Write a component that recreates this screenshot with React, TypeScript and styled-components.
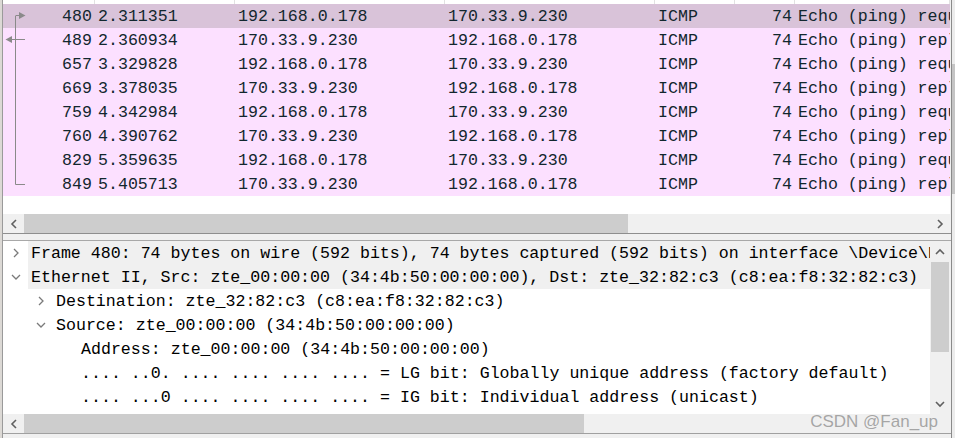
import React from "react";
import styled, { createGlobalStyle } from "styled-components";

const GlobalStyle = createGlobalStyle`
  html, body { margin: 0; padding: 0; background: #f0f0f0; overflow: hidden; }
  #root { width: 955px; height: 438px; }
`;

const MONO = `"Liberation Mono", "DejaVu Sans Mono", monospace`;

const Window = styled.div`
  position: relative;
  display: flex;
  width: 955px;
  height: 438px;
  overflow: hidden;
  background: #f0f0f0;
`;

const LeftEdge = styled.div`
  width: 2px;
  flex: none;
  background: #dcd9d5;
  border-right: 1px solid #9a9a9a;
`;

const Main = styled.div`
  width: 948px;
  flex: none;
  display: flex;
  flex-direction: column;
`;

const RightEdge = styled.div`
  flex: 1;
  display: flex;
  flex-direction: column;
  border-left: 1px solid #8a8a8a;
  background: #ececec;
`;

const EdgeThumb = styled.div<{ $top: number; $h: number }>`
  margin-top: ${(p) => p.$top}px;
  height: ${(p) => p.$h}px;
  background: #c4c4c4;
`;

/* ---------- Packet list ---------- */

const ListPane = styled.div`
  height: 233px;
  display: flex;
  flex-direction: column;
  background: #ffffff;
  width: 947px;
`;

const COLS = "92px 140px 210px 210px 80px 60px 1fr";

const HeaderStrip = styled.div`
  height: 4px;
  display: grid;
  grid-template-columns: ${COLS};
  background: #ffffff;
`;

const HeaderCell = styled.div`
  border-right: 1px solid #e2e2e2;
`;

const Rows = styled.div`
  position: relative;
`;

const Row = styled.div<{ $selected?: boolean }>`
  height: 24px;
  display: grid;
  grid-template-columns: ${COLS};
  align-items: center;
  background: ${(p) => (p.$selected ? "#d9c3d9" : "#fce0ff")};
  color: #12272e;
  font-family: ${MONO};
  font-size: 16.63px;
  white-space: nowrap;
  overflow: hidden;
`;

const Cell = styled.div<{ $right?: boolean }>`
  padding: ${(p) => (p.$right ? "0 3px 0 0" : "0 0 0 3px")};
  text-align: ${(p) => (p.$right ? "right" : "left")};
  overflow: hidden;
`;

const Gutter = styled.svg`
  position: absolute;
  left: 0;
  top: 0;
  pointer-events: none;
`;

const ListFiller = styled.div`
  flex: 1;
  background: #ffffff;
`;

/* ---------- Scrollbars ---------- */

const HScroll = styled.div`
  height: 19px;
  display: flex;
  background: #f0f0f0;
  flex: none;
`;

const ScrollButton = styled.div<{ $w?: number; $h?: number }>`
  width: ${(p) => p.$w ?? 21}px;
  height: ${(p) => p.$h ?? 19}px;
  flex: none;
  display: flex;
  align-items: center;
  justify-content: center;
  background: #f0f0f0;
`;

const HThumb = styled.div<{ $w: number }>`
  width: ${(p) => p.$w}px;
  flex: none;
  background: #cdcdcd;
`;

const Track = styled.div`
  flex: 1;
  background: #f0f0f0;
`;

const VScroll = styled.div`
  width: 20px;
  flex: none;
  display: flex;
  flex-direction: column;
  background: #f0f0f0;
`;

const VThumb = styled.div<{ $h: number }>`
  height: ${(p) => p.$h}px;
  margin: 0 1px 0 1px;
  flex: none;
  background: #cdcdcd;
`;

const Splitter = styled.div`
  height: 6px;
  flex: none;
  background: #f0f0f0;
  border-top: 1px solid #8e8e8e;
  border-bottom: 1px solid #a8a8a8;
`;

/* ---------- Detail tree ---------- */

const DetailPane = styled.div`
  height: 192px;
  display: flex;
  flex: none;
  width: 947px;
`;

const DetailMain = styled.div`
  width: 927px;
  display: flex;
  flex-direction: column;
`;

const DetailRows = styled.div`
  flex: 1;
  background: #ffffff;
  overflow: hidden;
`;

const TreeRow = styled.div<{ $level: number }>`
  height: 24px;
  display: flex;
  align-items: stretch;
  padding-left: ${(p) => p.$level * 25}px;
  font-family: ${MONO};
  font-size: 16.63px;
  color: #000000;
  white-space: nowrap;
`;

const Toggle = styled.div`
  width: 25px;
  flex: none;
  display: flex;
  align-items: center;
  justify-content: center;
`;

const TreeText = styled.div<{ $hl?: boolean }>`
  flex: 1;
  display: flex;
  align-items: center;
  padding-left: 3px;
  overflow: hidden;
  background: ${(p) => (p.$hl ? "#f0f0f0" : "transparent")};
`;

const BottomArea = styled.div`
  flex: 1;
  border-top: 1px solid #a0a0a0;
  background: #f0f0f0;
`;

const Watermark = styled.div`
  position: absolute;
  right: 17px;
  bottom: 5px;
  font-family: "Liberation Sans", Arial, sans-serif;
  font-size: 17px;
  line-height: 22px;
  color: rgba(140, 140, 140, 0.75);
  pointer-events: none;
`;

/* ---------- Icons ---------- */

const Chevron = ({ dir, color = "#7a7a7a", size = 10, sw = 1.3 }: { dir: "l" | "r" | "u" | "d"; color?: string; size?: number; sw?: number }) => {
  const pts = {
    r: "3,1 7,5 3,9",
    l: "7,1 3,5 7,9",
    d: "1,3 5,7 9,3",
    u: "1,7 5,3 9,7",
  }[dir];
  return (
    <svg width={size} height={size} viewBox="0 0 10 10">
      <polyline points={pts} fill="none" stroke={color} strokeWidth={sw} />
    </svg>
  );
};

const packets = [
  ["480", "2.311351", "192.168.0.178", "170.33.9.230", "ICMP", "74", "Echo (ping) request"],
  ["489", "2.360934", "170.33.9.230", "192.168.0.178", "ICMP", "74", "Echo (ping) reply"],
  ["657", "3.329828", "192.168.0.178", "170.33.9.230", "ICMP", "74", "Echo (ping) request"],
  ["669", "3.378035", "170.33.9.230", "192.168.0.178", "ICMP", "74", "Echo (ping) reply"],
  ["759", "4.342984", "192.168.0.178", "170.33.9.230", "ICMP", "74", "Echo (ping) request"],
  ["760", "4.390762", "170.33.9.230", "192.168.0.178", "ICMP", "74", "Echo (ping) reply"],
  ["829", "5.359635", "192.168.0.178", "170.33.9.230", "ICMP", "74", "Echo (ping) request"],
  ["849", "5.405713", "170.33.9.230", "192.168.0.178", "ICMP", "74", "Echo (ping) reply"],
];

const tree: { level: number; toggle?: "r" | "d"; text: string; hl?: boolean }[] = [
  { level: 0, toggle: "r", hl: true, text: "Frame 480: 74 bytes on wire (592 bits), 74 bytes captured (592 bits) on interface \\Device\\NPF_{0}, id 0" },
  { level: 0, toggle: "d", hl: true, text: "Ethernet II, Src: zte_00:00:00 (34:4b:50:00:00:00), Dst: zte_32:82:c3 (c8:ea:f8:32:82:c3)" },
  { level: 1, toggle: "r", text: "Destination: zte_32:82:c3 (c8:ea:f8:32:82:c3)" },
  { level: 1, toggle: "d", text: "Source: zte_00:00:00 (34:4b:50:00:00:00)" },
  { level: 2, text: "Address: zte_00:00:00 (34:4b:50:00:00:00)" },
  { level: 2, text: ".... ..0. .... .... .... .... = LG bit: Globally unique address (factory default)" },
  { level: 2, text: ".... ...0 .... .... .... .... = IG bit: Individual address (unicast)" },
  { level: 1, text: "Type: IPv4 (0x0800)" },
];

export default function App() {
  return (
    <>
      <GlobalStyle />
      <Window>
        <LeftEdge />
        <Main>
          <ListPane>
            <HeaderStrip>
              {Array.from({ length: 7 }).map((_, i) => (
                <HeaderCell key={i} />
              ))}
            </HeaderStrip>
            <Rows>
              {packets.map((p, i) => (
                <Row key={p[0]} $selected={i === 0}>
                  <Cell $right>{p[0]}</Cell>
                  <Cell>{p[1]}</Cell>
                  <Cell>{p[2]}</Cell>
                  <Cell>{p[3]}</Cell>
                  <Cell>{p[4]}</Cell>
                  <Cell $right>{p[5]}</Cell>
                  <Cell>{p[6]}</Cell>
                </Row>
              ))}
              <Gutter width="30" height="192" viewBox="0 0 30 192">
                <g stroke="#8a8a8a" strokeWidth="1" fill="none">
                  <line x1="12.5" y1="12" x2="12.5" y2="180.5" />
                  <line x1="12.5" y1="180.5" x2="22" y2="180.5" />
                  <line x1="12.5" y1="11.5" x2="18" y2="11.5" />
                  <line x1="4" y1="35.5" x2="22" y2="35.5" />
                </g>
                <polygon points="16,8 22.5,11.5 16,15" fill="#8a8a8a" />
                <polygon points="9,32 2.5,35.5 9,39" fill="#8a8a8a" />
              </Gutter>
            </Rows>
            <ListFiller />
            <HScroll>
              <ScrollButton>
                <Chevron dir="l" color="#606060" sw={1.6} />
              </ScrollButton>
              <HThumb $w={604} />
              <Track />
              <ScrollButton $w={20}>
                <Chevron dir="r" color="#606060" sw={1.6} />
              </ScrollButton>
            </HScroll>
          </ListPane>
          <Splitter />
          <DetailPane>
            <DetailMain>
              <DetailRows>
                {tree.map((t, i) => (
                  <TreeRow key={i} $level={t.level}>
                    <Toggle>{t.toggle && <Chevron dir={t.toggle} />}</Toggle>
                    <TreeText $hl={t.hl}>{t.text}</TreeText>
                  </TreeRow>
                ))}
              </DetailRows>
              <HScroll>
                <ScrollButton>
                  <Chevron dir="l" color="#606060" sw={1.6} />
                </ScrollButton>
                <HThumb $w={560} />
                <Track />
              </HScroll>
            </DetailMain>
            <VScroll>
              <ScrollButton $w={20} $h={21}>
                <Chevron dir="u" color="#606060" sw={1.6} />
              </ScrollButton>
              <VThumb $h={90} />
              <Track />
              <ScrollButton $w={20} $h={21}>
                <Chevron dir="d" color="#606060" sw={1.6} />
              </ScrollButton>
              <ScrollButton $w={20} $h={19} />
            </VScroll>
          </DetailPane>
          <BottomArea />
        </Main>
        <RightEdge>
          <EdgeThumb $top={64} $h={130} />
        </RightEdge>
        <Watermark>CSDN @Fan_up</Watermark>
      </Window>
    </>
  );
}
